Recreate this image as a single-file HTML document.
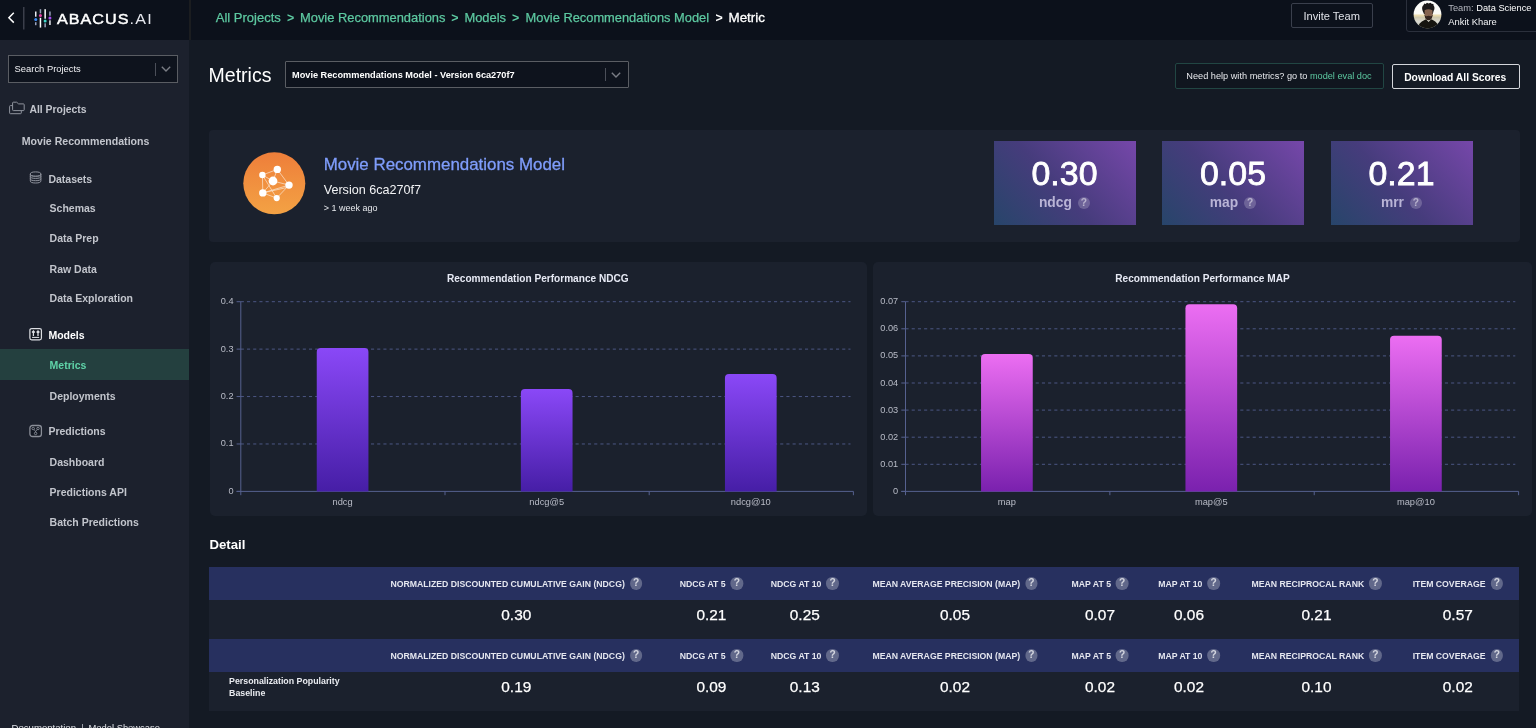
<!DOCTYPE html>
<html>
<head>
<meta charset="utf-8">
<title>Metrics</title>
<style>
*{box-sizing:border-box;margin:0;padding:0}
html,body{width:1536px;height:728px;overflow:hidden;background:#141a24;font-family:"Liberation Sans",sans-serif;color:#fff}
.abs{position:absolute;white-space:nowrap}
#topbar{position:absolute;left:0;top:0;width:1536px;height:40px;background:#0c111b}
#sidebar{position:absolute;left:0;top:40px;width:189px;height:688px;background:#1c212d}
#vline{position:absolute;left:189px;top:0;width:2px;height:40px;background:#1b1d20}
.t{position:absolute;white-space:nowrap;line-height:1;transform:translateY(-50%)}
.nav{font-weight:bold;font-size:10.5px;color:#c2c5cc}
.green{color:#5dc9a1}
.panel{position:absolute;background:#1b212d;border-radius:4px}
.card{position:absolute;top:141px;width:142px;height:84px;background:linear-gradient(48deg,#27456a 0%,#463c7c 45%,#7647aa 100%)}
.card .num{position:absolute;left:0;width:100%;top:14px;text-align:center;font-weight:normal;-webkit-text-stroke:0.8px #fff;font-size:33.9px;line-height:36px;color:#fff}
.card .lbl{position:absolute;left:0;width:100%;top:54px;text-align:center;font-weight:bold;font-size:13.8px;line-height:16px;color:#b9b4d6;letter-spacing:0}
.q{display:inline-block;width:12.4px;height:12.4px;border-radius:50%;background:rgba(255,255,255,0.2);color:rgba(255,255,255,0.5);font-size:10.2px;line-height:12.6px;font-weight:bold;text-align:center;vertical-align:middle;letter-spacing:0;margin-left:2px;position:relative;top:-0.5px}
.th{position:absolute;left:209px;width:1310px;height:33px;background:#27305f}
.tr{position:absolute;left:209px;width:1310px;height:39px;background:#1b212d}
.hc{position:absolute;top:0.5px;height:33px;line-height:33px;transform:translateX(-50%);white-space:nowrap;font-weight:bold;font-size:8.7px;color:#e4e6ef}
.hc .q{margin-left:5px;top:-1px;background:rgba(255,255,255,0.27);color:rgba(255,255,255,0.72)}
.vc{position:absolute;top:0;height:39px;line-height:39px;transform:translateX(-50%);white-space:nowrap;font-size:15.4px;color:#fff;top:-5px;-webkit-text-stroke:0.25px #fff}
</style>
</head>
<body>
<div id="root" style="position:absolute;left:0;top:0;width:1536px;height:728px;will-change:transform;overflow:hidden">
<div id="topbar"></div>
<div id="vline"></div>
<div id="sidebar"></div>

<!-- TOPBAR-CONTENT -->
<svg class="abs" style="left:0;top:0" width="160" height="40" viewBox="0 0 160 40">
  <polyline points="13.8,12.8 8.9,17.7 13.8,22.6" fill="none" stroke="#fff" stroke-width="1.5" stroke-linejoin="miter"/>
  <rect x="23" y="7" width="1.5" height="22.5" fill="#3b3f4b"/>
  <!-- logo bars -->
  <g>
    <rect x="35" y="11.5" width="1.5" height="5.2" fill="#e8eaf0"/>
    <rect x="35" y="22.2" width="1.5" height="3" fill="#9aa3bd"/>
    <circle cx="35.75" cy="19.6" r="1.5" fill="#3b8bf5"/>
    <rect x="39.7" y="9.2" width="1.5" height="4.2" fill="#9aa3bd"/>
    <rect x="39.7" y="17.8" width="1.5" height="9.8" fill="#ffffff"/>
    <circle cx="40.45" cy="15.6" r="1.5" fill="#e63fa5"/>
    <rect x="44.4" y="9.2" width="1.5" height="9.5" fill="#ffffff"/>
    <rect x="44.4" y="23.3" width="1.5" height="4" fill="#9aa3bd"/>
    <circle cx="45.15" cy="20.9" r="1.5" fill="#3fd6c8"/>
    <rect x="49.2" y="11.5" width="1.5" height="4.2" fill="#9aa3bd"/>
    <rect x="49.2" y="20.3" width="1.5" height="4.7" fill="#e8eaf0"/>
    <circle cx="49.95" cy="17.9" r="1.5" fill="#a64cf4"/>
  </g>
</svg>
<div class="t" style="left:56.8px;top:19px;font-size:14px;font-weight:normal;-webkit-text-stroke:0.45px #fff;letter-spacing:0.9px;color:#fff;transform:translateY(-50%) scaleX(1.15);transform-origin:0 50%">ABACUS<span style="font-weight:normal;-webkit-text-stroke:0;letter-spacing:1.1px;color:#e6e8ee">.AI</span></div>
<div class="t green" style="left:215.8px;top:17.3px;font-size:13px;-webkit-text-stroke:0.25px #5dc9a1">All Projects</div>
<div class="t green" style="left:287px;top:18px;font-size:12.4px;font-weight:bold">&gt;</div>
<div class="t green" style="left:300px;top:18px;font-size:12.9px;-webkit-text-stroke:0.25px #5dc9a1">Movie Recommendations</div>
<div class="t green" style="left:451.3px;top:18px;font-size:12.4px;font-weight:bold">&gt;</div>
<div class="t green" style="left:464.4px;top:18px;font-size:12.9px;-webkit-text-stroke:0.25px #5dc9a1">Models</div>
<div class="t green" style="left:512px;top:18px;font-size:12.4px;font-weight:bold">&gt;</div>
<div class="t green" style="left:525.6px;top:18px;font-size:12.85px;-webkit-text-stroke:0.25px #5dc9a1">Movie Recommendations Model</div>
<div class="t" style="left:715.6px;top:18px;font-size:12.4px;font-weight:bold;color:#fff">&gt;</div>
<div class="t" style="left:728.5px;top:18px;font-size:13.4px;color:#fff;-webkit-text-stroke:0.3px #fff">Metric</div>
<div class="abs" style="left:1291px;top:3px;width:82px;height:25px;border:1px solid #3a3f4c;border-radius:2px"></div>
<div class="t" style="left:1303.4px;top:16.6px;font-size:11.1px;color:#dfe1e7">Invite Team</div>
<div class="abs" style="left:1405.5px;top:-4px;width:140px;height:35.5px;border:1px solid #2b303c;border-radius:3px"></div>
<svg class="abs" style="left:1413px;top:0" width="29" height="29" viewBox="0 0 29 29">
  <defs><clipPath id="avc"><circle cx="14.5" cy="14.5" r="13.9"/></clipPath>
  <linearGradient id="avb" x1="0" y1="0" x2="0" y2="1"><stop offset="0" stop-color="#fdfdfb"/><stop offset="0.47" stop-color="#fbfaf5"/><stop offset="0.53" stop-color="#ecdcae"/><stop offset="0.6" stop-color="#cfc8ad"/><stop offset="0.75" stop-color="#d9d9d2"/><stop offset="1" stop-color="#a9ad98"/></linearGradient></defs>
  <g clip-path="url(#avc)">
    <rect x="0" y="0" width="29" height="29" fill="url(#avb)"/>
    <path d="M9.6 10.8 Q8.2 7 10.6 5 L11.2 3.6 L12.6 3.9 L14 2.8 L15.6 3.4 L17.4 2.7 L18.6 3.8 L20.4 3.9 L20.6 5.4 Q22.4 7.6 20.6 11 L19.8 14 L11 14 Z" fill="#1c1919"/>
    <path d="M11.6 10.2 Q15.2 8.2 19.4 10.2 L19.6 15 Q18.6 19.8 15.6 20 Q12.4 19.8 11.6 15 Z" fill="#85634f"/>
    <path d="M11.6 14 Q12 16.4 13.4 16.2 Q15.5 15.2 17.8 16.2 Q19.2 16.4 19.6 14 L19.6 15.4 Q18.8 20 15.6 20.2 Q12.2 20 11.6 15.4Z" fill="#33241e"/>
    <path d="M4.4 29 Q5.4 22.4 11.6 20 L13 19.2 L15.6 22 L18.2 19.2 L19.8 20 Q25.4 22.6 25.8 29Z" fill="#15140f"/>
  </g>
</svg>
<div class="t" style="left:1448.3px;top:9.4px;font-size:9.3px;color:#b4b7bf">Team: <span style="color:#fff">Data Science</span></div>
<div class="t" style="left:1448.3px;top:22px;font-size:9.4px;color:#f2f3f5">Ankit Khare</div>

<!-- SIDEBAR-CONTENT -->
<div class="abs" style="left:8px;top:55px;width:170px;height:27.5px;border:1px solid #5a5d63;background:#0e131d"></div>
<div class="t" style="left:14.6px;top:69.2px;font-size:9.4px;color:#f0f1f4">Search Projects</div>
<div class="abs" style="left:154.5px;top:62.5px;width:1px;height:13px;background:#4b4f59"></div>
<svg class="abs" style="left:160px;top:64px" width="12" height="10" viewBox="0 0 12 10"><polyline points="1.8,2.8 6,6.9 10.2,2.8" fill="none" stroke="#7a7d85" stroke-width="1.4"/></svg>

<svg class="abs" style="left:8px;top:100px" width="18" height="16" viewBox="0 0 18 16" fill="none" stroke="#8f939d" stroke-width="1">
  <path d="M4.6 5.6 H2.4 Q1.6 5.6 1.6 6.4 V12.9 Q1.6 13.7 2.4 13.7 H12.5 Q13.3 13.7 13.3 12.9 V10.7"/>
  <path d="M4.6 9.8 V3 Q4.6 2.2 5.4 2.2 H8.6 L10.6 3.9 H15.4 Q16.2 3.9 16.2 4.7 V9.8 Q16.2 10.6 15.4 10.6 H5.4 Q4.6 10.6 4.6 9.8Z"/>
</svg>
<div class="t nav" style="left:29.4px;top:110.2px;font-size:10.4px">All Projects</div>
<div class="t nav" style="left:21.7px;top:141.3px;font-size:10.6px">Movie Recommendations</div>

<svg class="abs" style="left:29px;top:170px" width="14" height="15" viewBox="0 0 14 15" fill="none" stroke="#8f939d" stroke-width="1">
  <ellipse cx="6.6" cy="4" rx="5.3" ry="2.1"/>
  <path d="M1.3 4 V10.9 Q1.3 13 6.6 13 Q11.9 13 11.9 10.9 V4"/>
  <path d="M1.3 6.3 Q1.3 8.4 6.6 8.4 Q11.9 8.4 11.9 6.3"/>
  <path d="M1.3 8.6 Q1.3 10.7 6.6 10.7 Q11.9 10.7 11.9 8.6"/>
  <path d="M1.3 4.4 Q1.3 6.5 6.6 6.5 Q11.9 6.5 11.9 4.4" stroke-width="0.7"/>
</svg>
<div class="t nav" style="left:48.4px;top:178.9px">Datasets</div>
<div class="t nav" style="left:49.6px;top:207.6px">Schemas</div>
<div class="t nav" style="left:49.6px;top:237.9px">Data Prep</div>
<div class="t nav" style="left:49.6px;top:269px">Raw Data</div>
<div class="t nav" style="left:49.6px;top:297.9px">Data Exploration</div>

<svg class="abs" style="left:28px;top:327px" width="15" height="15" viewBox="0 0 15 15" fill="none" stroke="#dcdee3" stroke-width="1.25">
  <rect x="1.9" y="1.5" width="11.5" height="11.4" rx="1.8" fill="#10141d"/>
  <path d="M5.4 8.9 V4.2 M4 5.5 L5.4 3.9 L6.8 5.5 M10 8.9 V4.2 M8.6 5.5 L10 3.9 L11.4 5.5" stroke-width="1.3"/>
  <path d="M4.1 10.4 H11.2" stroke-width="1.1"/>
</svg>
<div class="t nav" style="left:48.4px;top:335.1px;color:#fff">Models</div>
<div class="abs" style="left:0;top:349px;width:189px;height:30.5px;background:#24403f"></div>
<div class="t nav" style="left:49.6px;top:364.7px;color:#5fd3a8">Metrics</div>
<div class="t nav" style="left:49.6px;top:396px">Deployments</div>

<svg class="abs" style="left:28px;top:424px" width="15" height="15" viewBox="0 0 15 15" fill="none" stroke="#8a8e98" stroke-width="1.3">
  <rect x="1.9" y="1.5" width="11.5" height="11" rx="2.6" fill="#121722"/>
  <g stroke-width="0.9"><circle cx="5.2" cy="4.5" r="1.25"/><circle cx="10" cy="4.5" r="1.25"/><circle cx="7.6" cy="9.4" r="1.25"/>
  <path d="M5.9 5.5 L7.6 7.2 L9.3 5.5 M7.6 7.2 V8.2"/></g>
</svg>
<div class="t nav" style="left:48.4px;top:430.6px">Predictions</div>
<div class="t nav" style="left:49.6px;top:462px">Dashboard</div>
<div class="t nav" style="left:49.6px;top:492px">Predictions API</div>
<div class="t nav" style="left:49.6px;top:522px">Batch Predictions</div>
<div class="t" style="left:11.5px;top:728.2px;font-size:9.6px;color:#dfe1e6">Documentation</div>
<div class="abs" style="left:82.3px;top:724px;width:1px;height:6px;background:#9b9ea6"></div>
<div class="t" style="left:88.5px;top:728.2px;font-size:9.4px;color:#dfe1e6">Model Showcase</div>

<!-- MAIN-HEADER -->
<div class="t" style="left:208.6px;top:75.6px;font-size:19.5px;color:#fff">Metrics</div>
<div class="abs" style="left:285px;top:61px;width:343.5px;height:26.5px;border:1px solid #5a5d63;background:#0e131d;border-radius:1px"></div>
<div class="t" style="left:292px;top:76px;font-size:9.2px;font-weight:bold;color:#fff">Movie Recommendations Model - Version 6ca270f7</div>
<div class="abs" style="left:604.8px;top:68px;width:1px;height:13px;background:#4b4f59"></div>
<svg class="abs" style="left:610.2px;top:70.4px" width="12" height="10" viewBox="0 0 12 10"><polyline points="1.8,2.8 6,6.9 10.2,2.8" fill="none" stroke="#7a7d85" stroke-width="1.4"/></svg>
<div class="abs" style="left:1175px;top:63px;width:209px;height:26px;border:1px solid #214643;border-radius:2px;background:#10161f"></div>
<div class="t" style="left:1186.3px;top:77px;font-size:9.2px;color:#e6e8ec">Need help with metrics? go to <span class="green">model eval doc</span></div>
<div class="abs" style="left:1392px;top:64px;width:127.5px;height:25px;border:1px solid #d4d6db;border-radius:2px"></div>
<div class="t" style="left:1404.2px;top:78.1px;font-size:10.3px;font-weight:bold;color:#fff">Download All Scores</div>

<!-- MODEL-PANEL -->
<div class="panel" style="left:209px;top:130.3px;width:1310.5px;height:112px"></div>
<svg class="abs" style="left:243px;top:152.4px" width="63" height="63" viewBox="0 0 63 63">
  <defs><linearGradient id="og" x1="0" y1="0" x2="0" y2="1"><stop offset="0" stop-color="#ee7e3a"/><stop offset="1" stop-color="#f3a244"/></linearGradient></defs>
  <circle cx="31.3" cy="31.3" r="31" fill="url(#og)"/>
  <g stroke="#fbe6d2" stroke-width="0.7" fill="none">
    <path d="M34.3 17.4 L19.4 23 L19.8 40.9 L33.7 46.1 L46 33.1 Z"/>
    <path d="M34.3 17.4 L30 29 L46 33.1 M30 29 L19.8 40.9 L46 33.1 M19.8 40.9 L46 35 M19.4 23 L33.7 46.1 M30 29 L19.4 23"/>
  </g>
  <g fill="#fff">
    <circle cx="34.3" cy="17.4" r="3.7"/><circle cx="19.4" cy="23" r="3.2"/><circle cx="30" cy="29" r="4.4"/>
    <circle cx="46" cy="33.1" r="3.7"/><circle cx="19.8" cy="40.9" r="3.7"/><circle cx="33.7" cy="46.1" r="3.1"/>
  </g>
</svg>
<div class="t" style="left:323.7px;top:165px;font-size:16.9px;color:#7f9dfb;-webkit-text-stroke:0.3px #7f9dfb">Movie Recommendations Model</div>
<div class="t" style="left:323.7px;top:189.6px;font-size:12.6px;color:#f2f3f5">Version 6ca270f7</div>
<div class="t" style="left:323.7px;top:208.2px;font-size:9px;color:#e6e8ec">&gt; 1 week ago</div>
<div class="card" style="left:993.5px"><div class="num">0.30</div><div class="lbl">ndcg <span class="q">?</span></div></div>
<div class="card" style="left:1162px"><div class="num">0.05</div><div class="lbl">map <span class="q">?</span></div></div>
<div class="card" style="left:1330.5px"><div class="num">0.21</div><div class="lbl">mrr <span class="q">?</span></div></div>

<!-- CHARTS -->
<div class="panel" style="left:209.6px;top:262.4px;width:657.2px;height:253.5px;border-radius:5px"></div>
<div class="panel" style="left:873.4px;top:262.4px;width:658.4px;height:253.5px;border-radius:5px"></div>
<svg class="abs" style="left:0;top:0;font-family:'Liberation Sans',sans-serif" width="1536" height="728" viewBox="0 0 1536 728">
<line x1="236.60000000000002" y1="491.40" x2="240.8" y2="491.40" stroke="#56618f" stroke-width="1"/>
<text x="233.5" y="493.90" text-anchor="end" font-size="9.2" fill="#b9bcc7">0</text>
<line x1="240.8" y1="443.97" x2="850.5" y2="443.97" stroke="#4c5784" stroke-width="1" stroke-dasharray="3.1 3.1"/>
<line x1="236.60000000000002" y1="443.97" x2="240.8" y2="443.97" stroke="#56618f" stroke-width="1"/>
<text x="233.5" y="446.47" text-anchor="end" font-size="9.2" fill="#b9bcc7">0.1</text>
<line x1="240.8" y1="396.55" x2="850.5" y2="396.55" stroke="#4c5784" stroke-width="1" stroke-dasharray="3.1 3.1"/>
<line x1="236.60000000000002" y1="396.55" x2="240.8" y2="396.55" stroke="#56618f" stroke-width="1"/>
<text x="233.5" y="399.05" text-anchor="end" font-size="9.2" fill="#b9bcc7">0.2</text>
<line x1="240.8" y1="349.12" x2="850.5" y2="349.12" stroke="#4c5784" stroke-width="1" stroke-dasharray="3.1 3.1"/>
<line x1="236.60000000000002" y1="349.12" x2="240.8" y2="349.12" stroke="#56618f" stroke-width="1"/>
<text x="233.5" y="351.62" text-anchor="end" font-size="9.2" fill="#b9bcc7">0.3</text>
<line x1="240.8" y1="301.70" x2="850.5" y2="301.70" stroke="#4c5784" stroke-width="1" stroke-dasharray="3.1 3.1"/>
<line x1="236.60000000000002" y1="301.70" x2="240.8" y2="301.70" stroke="#56618f" stroke-width="1"/>
<text x="233.5" y="304.20" text-anchor="end" font-size="9.2" fill="#b9bcc7">0.4</text>
<line x1="240.8" y1="301.7" x2="240.8" y2="495.2" stroke="#56618f" stroke-width="1"/>
<line x1="236.60000000000002" y1="491.4" x2="853.4" y2="491.4" stroke="#56618f" stroke-width="1"/>
<line x1="445.00" y1="491.4" x2="445.00" y2="495.2" stroke="#56618f" stroke-width="1"/>
<line x1="649.20" y1="491.4" x2="649.20" y2="495.2" stroke="#56618f" stroke-width="1"/>
<line x1="853.40" y1="491.4" x2="853.40" y2="495.2" stroke="#56618f" stroke-width="1"/>
<linearGradient id="gn0" gradientUnits="userSpaceOnUse" x1="0" y1="347.90" x2="0" y2="491.4"><stop offset="0" stop-color="#8a48f7"/><stop offset="1" stop-color="#461ea6"/></linearGradient>
<path d="M316.75 491.4 V351.90 Q316.75 347.90 320.75 347.90 H364.45 Q368.45 347.90 368.45 351.90 V491.4 Z" fill="url(#gn0)"/>
<text x="342.60" y="504.80" text-anchor="middle" font-size="9.3" fill="#b9bcc7">ndcg</text>
<linearGradient id="gn1" gradientUnits="userSpaceOnUse" x1="0" y1="389.10" x2="0" y2="491.4"><stop offset="0" stop-color="#8a48f7"/><stop offset="1" stop-color="#461ea6"/></linearGradient>
<path d="M520.85 491.4 V393.10 Q520.85 389.10 524.85 389.10 H568.55 Q572.55 389.10 572.55 393.10 V491.4 Z" fill="url(#gn1)"/>
<text x="546.70" y="504.80" text-anchor="middle" font-size="9.3" fill="#b9bcc7">ndcg@5</text>
<linearGradient id="gn2" gradientUnits="userSpaceOnUse" x1="0" y1="374.10" x2="0" y2="491.4"><stop offset="0" stop-color="#8a48f7"/><stop offset="1" stop-color="#461ea6"/></linearGradient>
<path d="M724.95 491.4 V378.10 Q724.95 374.10 728.95 374.10 H772.65 Q776.65 374.10 776.65 378.10 V491.4 Z" fill="url(#gn2)"/>
<text x="750.80" y="504.80" text-anchor="middle" font-size="9.3" fill="#b9bcc7">ndcg@10</text>
<text x="537.8" y="281.6" text-anchor="middle" font-size="10.1" font-weight="bold" fill="#e6e9f4">Recommendation Performance NDCG</text>
<line x1="901.3" y1="491.40" x2="905.5" y2="491.40" stroke="#56618f" stroke-width="1"/>
<text x="898.2" y="493.90" text-anchor="end" font-size="9.2" fill="#b9bcc7">0</text>
<line x1="905.5" y1="464.30" x2="1515.3" y2="464.30" stroke="#4c5784" stroke-width="1" stroke-dasharray="3.1 3.1"/>
<line x1="901.3" y1="464.30" x2="905.5" y2="464.30" stroke="#56618f" stroke-width="1"/>
<text x="898.2" y="466.80" text-anchor="end" font-size="9.2" fill="#b9bcc7">0.01</text>
<line x1="905.5" y1="437.20" x2="1515.3" y2="437.20" stroke="#4c5784" stroke-width="1" stroke-dasharray="3.1 3.1"/>
<line x1="901.3" y1="437.20" x2="905.5" y2="437.20" stroke="#56618f" stroke-width="1"/>
<text x="898.2" y="439.70" text-anchor="end" font-size="9.2" fill="#b9bcc7">0.02</text>
<line x1="905.5" y1="410.10" x2="1515.3" y2="410.10" stroke="#4c5784" stroke-width="1" stroke-dasharray="3.1 3.1"/>
<line x1="901.3" y1="410.10" x2="905.5" y2="410.10" stroke="#56618f" stroke-width="1"/>
<text x="898.2" y="412.60" text-anchor="end" font-size="9.2" fill="#b9bcc7">0.03</text>
<line x1="905.5" y1="383.00" x2="1515.3" y2="383.00" stroke="#4c5784" stroke-width="1" stroke-dasharray="3.1 3.1"/>
<line x1="901.3" y1="383.00" x2="905.5" y2="383.00" stroke="#56618f" stroke-width="1"/>
<text x="898.2" y="385.50" text-anchor="end" font-size="9.2" fill="#b9bcc7">0.04</text>
<line x1="905.5" y1="355.90" x2="1515.3" y2="355.90" stroke="#4c5784" stroke-width="1" stroke-dasharray="3.1 3.1"/>
<line x1="901.3" y1="355.90" x2="905.5" y2="355.90" stroke="#56618f" stroke-width="1"/>
<text x="898.2" y="358.40" text-anchor="end" font-size="9.2" fill="#b9bcc7">0.05</text>
<line x1="905.5" y1="328.80" x2="1515.3" y2="328.80" stroke="#4c5784" stroke-width="1" stroke-dasharray="3.1 3.1"/>
<line x1="901.3" y1="328.80" x2="905.5" y2="328.80" stroke="#56618f" stroke-width="1"/>
<text x="898.2" y="331.30" text-anchor="end" font-size="9.2" fill="#b9bcc7">0.06</text>
<line x1="905.5" y1="301.70" x2="1515.3" y2="301.70" stroke="#4c5784" stroke-width="1" stroke-dasharray="3.1 3.1"/>
<line x1="901.3" y1="301.70" x2="905.5" y2="301.70" stroke="#56618f" stroke-width="1"/>
<text x="898.2" y="304.20" text-anchor="end" font-size="9.2" fill="#b9bcc7">0.07</text>
<line x1="905.5" y1="301.7" x2="905.5" y2="495.2" stroke="#56618f" stroke-width="1"/>
<line x1="901.3" y1="491.4" x2="1518.6" y2="491.4" stroke="#56618f" stroke-width="1"/>
<line x1="1109.87" y1="491.4" x2="1109.87" y2="495.2" stroke="#56618f" stroke-width="1"/>
<line x1="1314.23" y1="491.4" x2="1314.23" y2="495.2" stroke="#56618f" stroke-width="1"/>
<line x1="1518.60" y1="491.4" x2="1518.60" y2="495.2" stroke="#56618f" stroke-width="1"/>
<linearGradient id="gm0" gradientUnits="userSpaceOnUse" x1="0" y1="353.90" x2="0" y2="491.4"><stop offset="0" stop-color="#ec6ef2"/><stop offset="1" stop-color="#7a21ae"/></linearGradient>
<path d="M981.05 491.4 V357.90 Q981.05 353.90 985.05 353.90 H1028.75 Q1032.75 353.90 1032.75 357.90 V491.4 Z" fill="url(#gm0)"/>
<text x="1006.90" y="504.80" text-anchor="middle" font-size="9.3" fill="#b9bcc7">map</text>
<linearGradient id="gm1" gradientUnits="userSpaceOnUse" x1="0" y1="304.30" x2="0" y2="491.4"><stop offset="0" stop-color="#ec6ef2"/><stop offset="1" stop-color="#7a21ae"/></linearGradient>
<path d="M1185.45 491.4 V308.30 Q1185.45 304.30 1189.45 304.30 H1233.15 Q1237.15 304.30 1237.15 308.30 V491.4 Z" fill="url(#gm1)"/>
<text x="1211.30" y="504.80" text-anchor="middle" font-size="9.3" fill="#b9bcc7">map@5</text>
<linearGradient id="gm2" gradientUnits="userSpaceOnUse" x1="0" y1="335.70" x2="0" y2="491.4"><stop offset="0" stop-color="#ec6ef2"/><stop offset="1" stop-color="#7a21ae"/></linearGradient>
<path d="M1390.05 491.4 V339.70 Q1390.05 335.70 1394.05 335.70 H1437.75 Q1441.75 335.70 1441.75 339.70 V491.4 Z" fill="url(#gm2)"/>
<text x="1415.90" y="504.80" text-anchor="middle" font-size="9.3" fill="#b9bcc7">map@10</text>
<text x="1202.5" y="281.6" text-anchor="middle" font-size="10.1" font-weight="bold" fill="#e6e9f4">Recommendation Performance MAP</text>
</svg>

<!-- TABLE -->
<div class="t" style="left:209.4px;top:544.8px;font-size:13.2px;font-weight:bold;color:#fff">Detail</div>
<div class="th" style="top:567.3px"><div class="hc" style="left:307.3px">NORMALIZED DISCOUNTED CUMULATIVE GAIN (NDCG)<span class="q">?</span></div><div class="hc" style="left:502.4px">NDCG AT 5<span class="q">?</span></div><div class="hc" style="left:595.8px">NDCG AT 10<span class="q">?</span></div><div class="hc" style="left:746.0px">MEAN AVERAGE PRECISION (MAP)<span class="q">?</span></div><div class="hc" style="left:891.0px">MAP AT 5<span class="q">?</span></div><div class="hc" style="left:980.0px">MAP AT 10<span class="q">?</span></div><div class="hc" style="left:1107.5px">MEAN RECIPROCAL RANK<span class="q">?</span></div><div class="hc" style="left:1248.8px">ITEM COVERAGE<span class="q">?</span></div></div>
<div class="tr" style="top:600.3px"><div class="vc" style="left:307.3px">0.30</div><div class="vc" style="left:502.4px">0.21</div><div class="vc" style="left:595.8px">0.25</div><div class="vc" style="left:746.0px">0.05</div><div class="vc" style="left:891.0px">0.07</div><div class="vc" style="left:980.0px">0.06</div><div class="vc" style="left:1107.5px">0.21</div><div class="vc" style="left:1248.8px">0.57</div></div>
<div class="th" style="top:639.3px"><div class="hc" style="left:307.3px">NORMALIZED DISCOUNTED CUMULATIVE GAIN (NDCG)<span class="q">?</span></div><div class="hc" style="left:502.4px">NDCG AT 5<span class="q">?</span></div><div class="hc" style="left:595.8px">NDCG AT 10<span class="q">?</span></div><div class="hc" style="left:746.0px">MEAN AVERAGE PRECISION (MAP)<span class="q">?</span></div><div class="hc" style="left:891.0px">MAP AT 5<span class="q">?</span></div><div class="hc" style="left:980.0px">MAP AT 10<span class="q">?</span></div><div class="hc" style="left:1107.5px">MEAN RECIPROCAL RANK<span class="q">?</span></div><div class="hc" style="left:1248.8px">ITEM COVERAGE<span class="q">?</span></div></div>
<div class="tr" style="top:672.3px"><div class="abs" style="left:20.1px;top:3.2px;font-size:8.8px;font-weight:bold;line-height:12px;color:#e9ebf0;white-space:normal;width:130px">Personalization Popularity Baseline</div><div class="vc" style="left:307.3px">0.19</div><div class="vc" style="left:502.4px">0.09</div><div class="vc" style="left:595.8px">0.13</div><div class="vc" style="left:746.0px">0.02</div><div class="vc" style="left:891.0px">0.02</div><div class="vc" style="left:980.0px">0.02</div><div class="vc" style="left:1107.5px">0.10</div><div class="vc" style="left:1248.8px">0.02</div></div>

</div>
</body>
</html>
